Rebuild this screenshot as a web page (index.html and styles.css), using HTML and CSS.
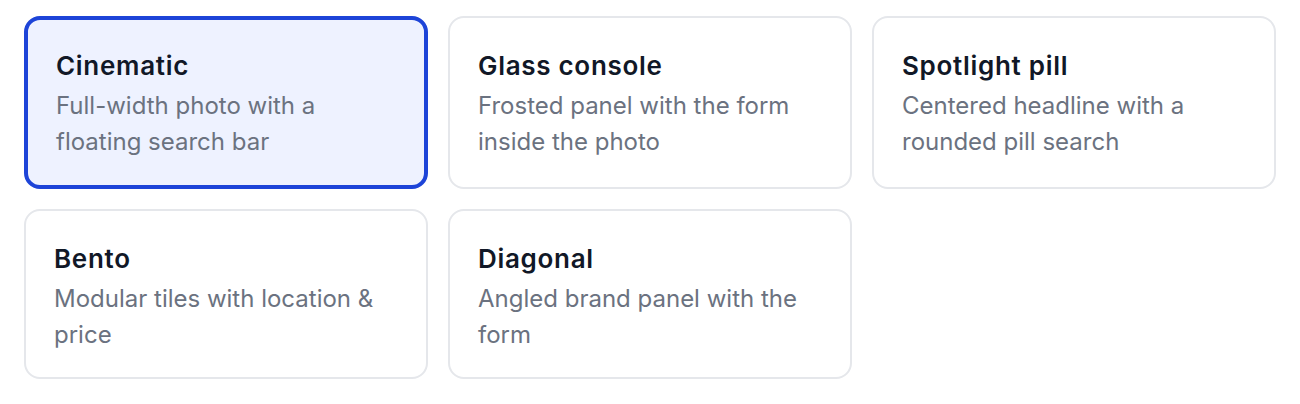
FILE: index.html
```html
<!DOCTYPE html>
<html lang="en">
<head>
  <meta charset="UTF-8">
  <title>Hero layouts</title>
  <link rel="stylesheet" href="styles.css">
</head>
<body>
  <div class="layouts">
    <button class="layout active">
      <span class="name">Cinematic</span>
      <span class="desc">Full-width photo with a floating search bar</span>
    </button>
    <button class="layout">
      <span class="name">Glass console</span>
      <span class="desc">Frosted panel with the form inside the photo</span>
    </button>
    <button class="layout">
      <span class="name">Spotlight pill</span>
      <span class="desc">Centered headline with a rounded pill search</span>
    </button>
    <button class="layout">
      <span class="name">Bento</span>
      <span class="desc">Modular tiles with location &amp; price</span>
    </button>
    <button class="layout">
      <span class="name">Diagonal</span>
      <span class="desc">Angled brand panel with the form</span>
    </button>
  </div>
</body>
</html>
```

FILE: styles.css
```css
:root {
  --border: #e5e7eb;
  --accent: #1d44d8;
  --accent-bg: #eef2ff;
  --title: #111827;
  --muted: #6b7280;
}
* { box-sizing: border-box; }
body {
  margin: 0;
  background: #fff;
  font-family: Inter, 'Noto Sans', sans-serif;
}
.layouts {
  display: grid;
  grid-template-columns: repeat(3, 1fr);
  gap: 20px;
  padding: 16px 24px;
}
.layout {
  display: flex;
  flex-direction: column;
  align-items: flex-start;
  text-align: left;
  padding: 31px 28px 24px;
  border: 2px solid var(--border);
  border-radius: 16px;
  background: #fff;
  font-family: inherit;
  cursor: pointer;
}
.layout.active {
  border: 4px solid var(--accent);
  background: var(--accent-bg);
  padding: 29px 28px 25px;
}
.name {
  font-size: 26px;
  line-height: 34px;
  font-weight: 600;
  letter-spacing: 0.7px;
  color: var(--title);
}
.desc {
  margin-top: 5px;
  font-size: 24px;
  line-height: 36px;
  color: var(--muted);
}
```
